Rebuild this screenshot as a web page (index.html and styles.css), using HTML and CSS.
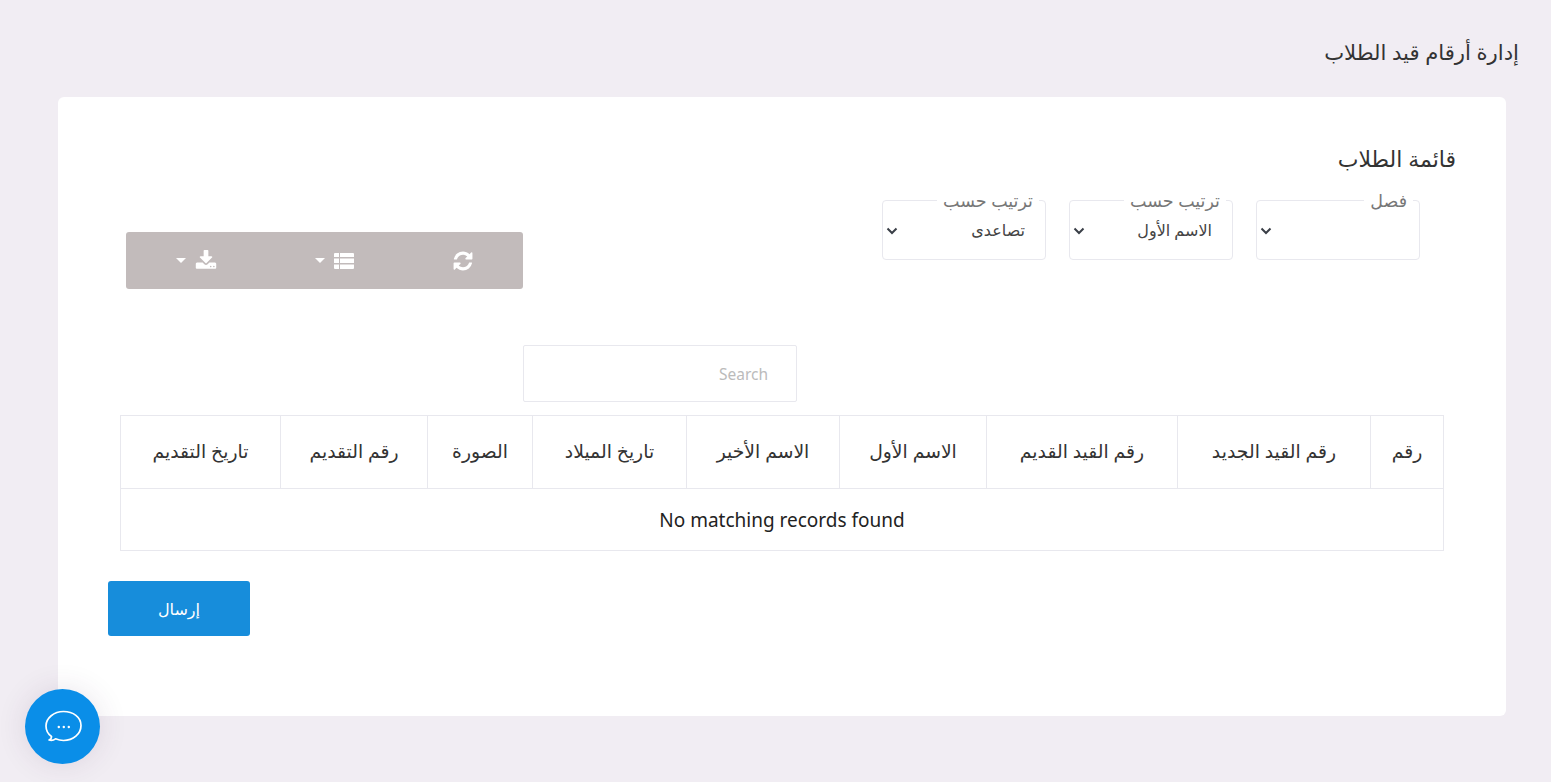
FILE: index.html
```html
<!DOCTYPE html>
<html lang="ar" dir="rtl">
<head>
  <meta charset="UTF-8">
  <meta name="viewport" content="width=device-width, initial-scale=1.0">
  <title>إدارة أرقام قيد الطلاب</title>
  <link rel="stylesheet" href="styles.css">
</head>
<body>
  <h1 class="page-title">إدارة أرقام قيد الطلاب</h1>

  <div class="card">
    <h2 class="card-title">قائمة الطلاب</h2>

    <div class="controls">
      <div class="filters">
        <fieldset class="filter">
          <legend>فصل</legend>
          <select class="filter-select"><option></option></select>
          <svg class="chevron" viewBox="0 0 12 8"><path d="M1.5 1.5 6 6l4.5-4.5"/></svg>
        </fieldset>
        <fieldset class="filter">
          <legend>ترتيب حسب</legend>
          <select class="filter-select"><option>الاسم الأول</option></select>
          <svg class="chevron" viewBox="0 0 12 8"><path d="M1.5 1.5 6 6l4.5-4.5"/></svg>
        </fieldset>
        <fieldset class="filter">
          <legend>ترتيب حسب</legend>
          <select class="filter-select"><option>تصاعدى</option></select>
          <svg class="chevron" viewBox="0 0 12 8"><path d="M1.5 1.5 6 6l4.5-4.5"/></svg>
        </fieldset>
      </div>

      <div class="toolbar">
        <button class="tool-btn tool-refresh">
          <svg class="icon" viewBox="0 0 1792 1792"><path d="M1639 1056q0 5-1 7-64 268-268 434.5t-478 166.5q-146 0-282.5-55t-243.5-157l-129 129q-19 19-45 19t-45-19-19-45v-448q0-26 19-45t45-19h448q26 0 45 19t19 45-19 45l-137 137q71 66 161 102t187 36q134 0 250-65t186-179q11-17 53-117 8-23 30-23h192q13 0 22.5 9.5t9.5 22.5zm25-800v448q0 26-19 45t-45 19h-448q-26 0-45-19t-19-45 19-45l138-138q-148-137-349-137-134 0-250 65t-186 179q-11 17-53 117-8 23-30 23h-199q-13 0-22.5-9.5t-9.5-22.5v-7q65-268 270-434.5t480-166.5q146 0 284 55.5t245 156.5l130-129q19-19 45-19t45 19 19 45z"/></svg>
        </button>
        <button class="tool-btn tool-columns">
          <svg class="icon icon-list" viewBox="0 0 20 16"><path d="M0 1a1 1 0 0 1 1-1h4v4H0zM6 0h13a1 1 0 0 1 1 1v3H6zM0 5.500h5v4.500H0zM6 5.500h14v4.500H6zM0 11.500h5V16H1a1 1 0 0 1-1-1zM6 11.500h14V15a1 1 0 0 1-1 1H6z"/></svg>
          <span class="caret"></span>
        </button>
        <button class="tool-btn tool-export">
          <svg class="icon" viewBox="0 0 1792 1792"><path d="M1344 1344q0-26-19-45t-45-19-45 19-19 45 19 45 45 19 45-19 19-45zm256 0q0-26-19-45t-45-19-45 19-19 45 19 45 45 19 45-19 19-45zm128-224v320q0 40-28 68t-68 28h-1472q-40 0-68-28t-28-68v-320q0-40 28-68t68-28h465l135 136q58 56 136 56t136-56l136-136h464q40 0 68 28t28 68zm-325-569q17 41-14 70l-448 448q-18 19-45 19t-45-19l-448-448q-31-29-14-70 17-39 59-39h256v-448q0-26 19-45t45-19h256q26 0 45 19t19 45v448h256q42 0 59 39z"/></svg>
          <span class="caret"></span>
        </button>
      </div>
    </div>

    <div class="search-row">
      <input class="search" type="text" placeholder="Search">
    </div>

    <table class="students">
      <thead>
        <tr>
          <th>رقم</th>
          <th>رقم القيد الجديد</th>
          <th>رقم القيد القديم</th>
          <th>الاسم الأول</th>
          <th>الاسم الأخير</th>
          <th>تاريخ الميلاد</th>
          <th>الصورة</th>
          <th>رقم التقديم</th>
          <th>تاريخ التقديم</th>
        </tr>
      </thead>
      <tbody>
        <tr>
          <td class="empty" colspan="9">No matching records found</td>
        </tr>
      </tbody>
    </table>

    <div class="actions">
      <button class="submit">إرسال</button>
    </div>
  </div>

  <!-- Chat bubble -->
  <button class="chat">
    <svg viewBox="0 0 38 34" class="chat-icon">
      <path class="chat-line" d="M19.500 1.500C10 1.500 2 8 2 16c0 4 2 8 5.500 10.500 0 1.500-1 3-2.500 3.500 2 .6 4.500.4 6.500-1.200 2.400 1 5 1.700 8 1.700 9.700 0 17.500-6.500 17.500-15S29.200 1.500 19.500 1.500z"/>
      <circle cx="14.800" cy="17" r="1.200"/>
      <circle cx="19.800" cy="17" r="1.200"/>
      <circle cx="24.800" cy="17" r="1.200"/>
    </svg>
  </button>
</body>
</html>
```

FILE: styles.css
```css
* {
  box-sizing: border-box;
}
body {
  margin: 0;
  min-height: 782px;
  padding: 0 45px 66px 45px;
  background-color: #f1edf3;
  color: #333;
  font-family: "Noto Sans", "DejaVu Sans", sans-serif;
  overflow: hidden;
}
.page-title {
  margin: 0 -13px 0 0;
  height: 97px;
  padding-top: 36px;
  font-size: 21.200px;
  line-height: 32px;
  font-weight: 500;
}
.card {
  margin: 0 0 0 13px;
  height: 619px;
  padding: 45px 50px 0;
  background-color: #fff;
  border-radius: 6px;
}
.card-title {
  margin: 0;
  font-size: 22px;
  line-height: 32px;
  font-weight: 500;
}

/* filters + toolbar */
.controls {
  display: flex;
  justify-content: space-between;
  align-items: flex-start;
  margin: 26px 36px 0 18px;
  height: 145px;
}
.filters {
  display: flex;
  gap: 23px;
}
.filter {
  position: relative;
  width: 164px;
  height: 68px;
  margin: -8px 0 0;
  padding: 0 20px 0 0;
  border: 1px solid #e8e8ee;
  border-radius: 4px;
  min-width: 0;
}
.filter legend {
  padding: 0 6px;
  margin-right: -14px;
  font-size: 17.500px;
  line-height: 16px;
  color: #777;
}
.filter-select {
  display: block;
  width: 100%;
  height: 44px;
  border: none;
  background: none;
  appearance: none;
  outline: none;
  font: inherit;
  font-size: 16px;
  color: #444;
  padding: 0;
}
.chevron {
  position: absolute;
  left: 3px;
  top: 19px;
  width: 12px;
  height: 8px;
  fill: none;
  stroke: #3a3f47;
  stroke-width: 2;
}
.toolbar {
  display: flex;
  width: 397px;
  height: 57px;
  margin-top: 32px;
  background-color: #c2bbbb;
  border-radius: 3px;
}
.tool-btn {
  display: flex;
  align-items: center;
  justify-content: center;
  gap: 9px;
  border: none;
  background: none;
  padding: 0;
}
.tool-refresh {
  width: 120px;
}
.tool-columns {
  width: 137px;
}
.tool-export {
  width: 140px;
}
.icon {
  width: 22px;
  height: 22px;
  fill: #fff;
}
.icon-list {
  width: 20px;
  height: 16px;
}
.caret {
  width: 0;
  height: 0;
  border-top: 5px solid #fff;
  border-left: 5px solid transparent;
  border-right: 5px solid transparent;
}

/* search */
.search-row {
  margin-right: 659px;
}
.search {
  display: block;
  width: 274px;
  height: 57px;
  padding: 0 28px;
  border: 1px solid #e8e8ee;
  border-radius: 2px;
  font: inherit;
  font-size: 15.500px;
  outline: none;
}
.search::placeholder {
  color: #bbb;
}

/* table */
.students {
  width: 1323px;
  margin: 13px 12px 0 0;
  border-collapse: collapse;
  table-layout: fixed;
}
.students th,
.students td {
  border: 1px solid #e8e8ee;
  font-weight: 400;
  font-size: 18.800px;
  color: #333;
  text-align: center;
}
.students th {
  height: 73px;
  padding-bottom: 3px;
}
.students th:nth-child(1) { width: 73px; }
.students th:nth-child(2) { width: 193px; }
.students th:nth-child(3) { width: 191px; }
.students th:nth-child(4) { width: 147px; }
.students th:nth-child(5) { width: 153px; }
.students th:nth-child(6) { width: 154px; }
.students th:nth-child(7) { width: 105px; }
.students th:nth-child(8) { width: 147px; }
.students th:nth-child(9) { width: 160px; }
.students .empty {
  height: 62px;
  font-size: 19px;
  color: #222;
}

.actions {
  display: flex;
  justify-content: flex-end;
  margin-top: 30px;
}
.submit {
  width: 142px;
  height: 55px;
  border: none;
  border-radius: 3px;
  background-color: #178ddb;
  color: #fff;
  font: inherit;
  font-size: 16px;
}

.chat {
  position: fixed;
  left: 25px;
  top: 689px;
  width: 75px;
  height: 75px;
  padding: 0;
  border: none;
  border-radius: 50%;
  background-color: #0a8ee8;
  box-shadow: 0 0 30px rgba(70, 40, 80, 0.12);
  display: flex;
  align-items: center;
  justify-content: center;
}
.chat-icon {
  width: 38px;
  height: 34px;
  fill: #fff;
}
.chat-line {
  fill: none;
  stroke: #fff;
  stroke-width: 1.700;
  stroke-linejoin: round;
}
```
